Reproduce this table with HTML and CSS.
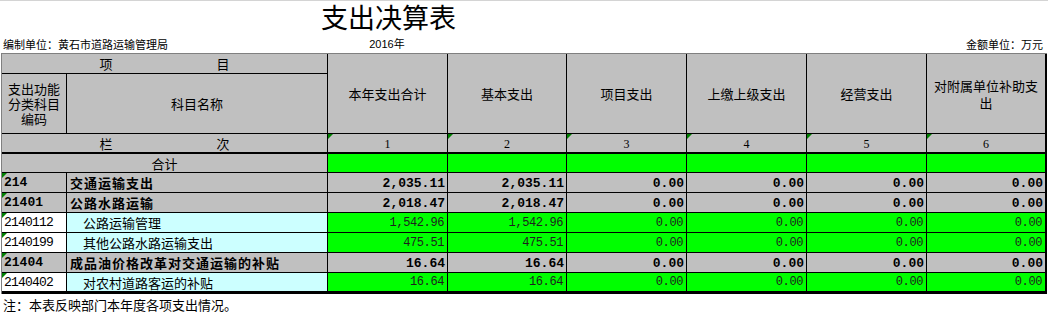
FILE: index.html
```html
<!DOCTYPE html>
<html lang="zh-CN">
<head>
<meta charset="utf-8">
<title>支出决算表</title>
<link rel="stylesheet" href="styles.css">
</head>
<body>
<div class="page">
  <h1 class="title">支出决算表</h1>
  <div class="info">
    <span class="org">编制单位：黄石市道路运输管理局</span>
    <span class="year">2016年</span>
    <span class="unit">金额单位：万元</span>
  </div>
  <div class="sheet">
    <div class="c span2 spread"><span>项</span><span>目</span></div>
    <div class="c hd">本年支出合计</div>
    <div class="c hd">基本支出</div>
    <div class="c hd">项目支出</div>
    <div class="c hd">上缴上级支出</div>
    <div class="c hd">经营支出</div>
    <div class="c hd tall">对附属单位补助支出</div>
    <div class="c">支出功能<br>分类科目<br>编码</div>
    <div class="c">科目名称</div>

    <div class="c span2 spread"><span>栏</span><span>次</span></div>
    <div class="c idx mk">1</div>
    <div class="c idx mk">2</div>
    <div class="c idx mk">3</div>
    <div class="c idx mk">4</div>
    <div class="c idx mk">5</div>
    <div class="c idx mk">6</div>

    <div class="c span2 sum">合计</div>
    <div class="c g sum"></div>
    <div class="c g sum"></div>
    <div class="c g sum"></div>
    <div class="c g sum"></div>
    <div class="c g sum"></div>
    <div class="c g sum"></div>

    <div class="c code b mk">214</div>
    <div class="c name b">交通运输支出</div>
    <div class="c num b">2,035.11</div>
    <div class="c num b">2,035.11</div>
    <div class="c num b">0.00</div>
    <div class="c num b">0.00</div>
    <div class="c num b">0.00</div>
    <div class="c num b">0.00</div>

    <div class="c code b mk">21401</div>
    <div class="c name b">公路水路运输</div>
    <div class="c num b">2,018.47</div>
    <div class="c num b">2,018.47</div>
    <div class="c num b">0.00</div>
    <div class="c num b">0.00</div>
    <div class="c num b">0.00</div>
    <div class="c num b">0.00</div>

    <div class="c code w mk">2140112</div>
    <div class="c name cy sub">公路运输管理</div>
    <div class="c num g">1,542.96</div>
    <div class="c num g">1,542.96</div>
    <div class="c num g">0.00</div>
    <div class="c num g">0.00</div>
    <div class="c num g">0.00</div>
    <div class="c num g">0.00</div>

    <div class="c code w mk">2140199</div>
    <div class="c name cy sub">其他公路水路运输支出</div>
    <div class="c num g">475.51</div>
    <div class="c num g">475.51</div>
    <div class="c num g">0.00</div>
    <div class="c num g">0.00</div>
    <div class="c num g">0.00</div>
    <div class="c num g">0.00</div>

    <div class="c code b mk">21404</div>
    <div class="c name b">成品油价格改革对交通运输的补贴</div>
    <div class="c num b">16.64</div>
    <div class="c num b">16.64</div>
    <div class="c num b">0.00</div>
    <div class="c num b">0.00</div>
    <div class="c num b">0.00</div>
    <div class="c num b">0.00</div>

    <div class="c code w mk">2140402</div>
    <div class="c name cy sub">对农村道路客运的补贴</div>
    <div class="c num g">16.64</div>
    <div class="c num g">16.64</div>
    <div class="c num g">0.00</div>
    <div class="c num g">0.00</div>
    <div class="c num g">0.00</div>
    <div class="c num g">0.00</div>
  </div>
  <p class="note">注：本表反映部门本年度各项支出情况。</p>
</div>
</body>
</html>
```

FILE: styles.css
```css
* { box-sizing: border-box; }
html, body { margin: 0; padding: 0; background: #fff; }
body {
  font-family: "Noto Sans CJK SC", sans-serif;
  color: #000;
}
.page {
  width: 1048px;
  height: 314px;
  border-top: 1px solid #d4d4d4;
  padding-left: 1px;
  overflow: hidden;
}
.title {
  margin: 0;
  padding: 1px 0 0 320px;
  height: 30px;
  font-size: 27px;
  line-height: 29px;
  font-weight: normal;
}
.info {
  display: grid;
  grid-template-columns: 297px 174px 1fr;
  height: 22px;
  padding: 7px 5px 2px 2px;
  font-size: 11px;
  line-height: 13px;
}
.info .year {
  text-align: center;
  font-family: "Liberation Sans", "Noto Sans CJK SC", sans-serif;
}
.info .unit { text-align: right; }

.sheet {
  display: grid;
  grid-template-columns: 64px 260px 119px 118px 119px 119px 119px 118px;
  grid-template-rows: 19px 59px 18px 19px 19px 19px 19px 19px 19px 18px;
  gap: 1px;
  width: max-content;
  background: #000;
  border-top: 1px solid #808080;
  border-left: 1px solid #808080;
  padding: 0 2px 3px 0;
}
.c {
  position: relative;
  display: flex;
  align-items: center;
  justify-content: center;
  min-width: 0;
  padding: 0 3px;
  background: #c0c0c0;
  font-size: 13px;
  line-height: 15px;
  text-align: center;
  white-space: normal;
}
.span2 { grid-column: span 2; }
.hd { grid-row: span 2; }
.tall { line-height: 17px; padding: 0 4px; }
.spread { gap: 104px; }
.sum { margin-top: 1px; }
.g { background: #00ff00; }
.cy { background: #ccffff; }
.w { background: #fff; }

.idx {
  font-family: "Liberation Serif", serif;
  font-size: 12px;
  padding-top: 3px;
}
.mk::before {
  content: "";
  position: absolute;
  left: 0;
  top: 0;
  border-top: 5px solid #008000;
  border-right: 5px solid transparent;
}
.code {
  justify-content: flex-start;
  padding-left: 2px;
  font-family: "Liberation Mono", monospace;
  font-size: 13px;
  letter-spacing: -0.8px;
}
.code.b { font-weight: bold; letter-spacing: 0; }
.name {
  justify-content: flex-start;
  padding-left: 3px;
  white-space: nowrap;
}
.name.b { font-weight: bold; letter-spacing: 1px; }
.name.sub { padding-left: 16px; }
.num {
  justify-content: flex-end;
  padding-right: 3px;
  padding-top: 1px;
  font-family: "Liberation Mono", monospace;
  font-size: 12px;
  letter-spacing: -0.4px;
  color: #1e1e1e;
}
.num.b { font-size: 13px; font-weight: bold; letter-spacing: 0; color: #000; padding-right: 2px; }

.note {
  margin: 3px 0 0 2px;
  font-size: 13px;
  line-height: 15px;
}
```
